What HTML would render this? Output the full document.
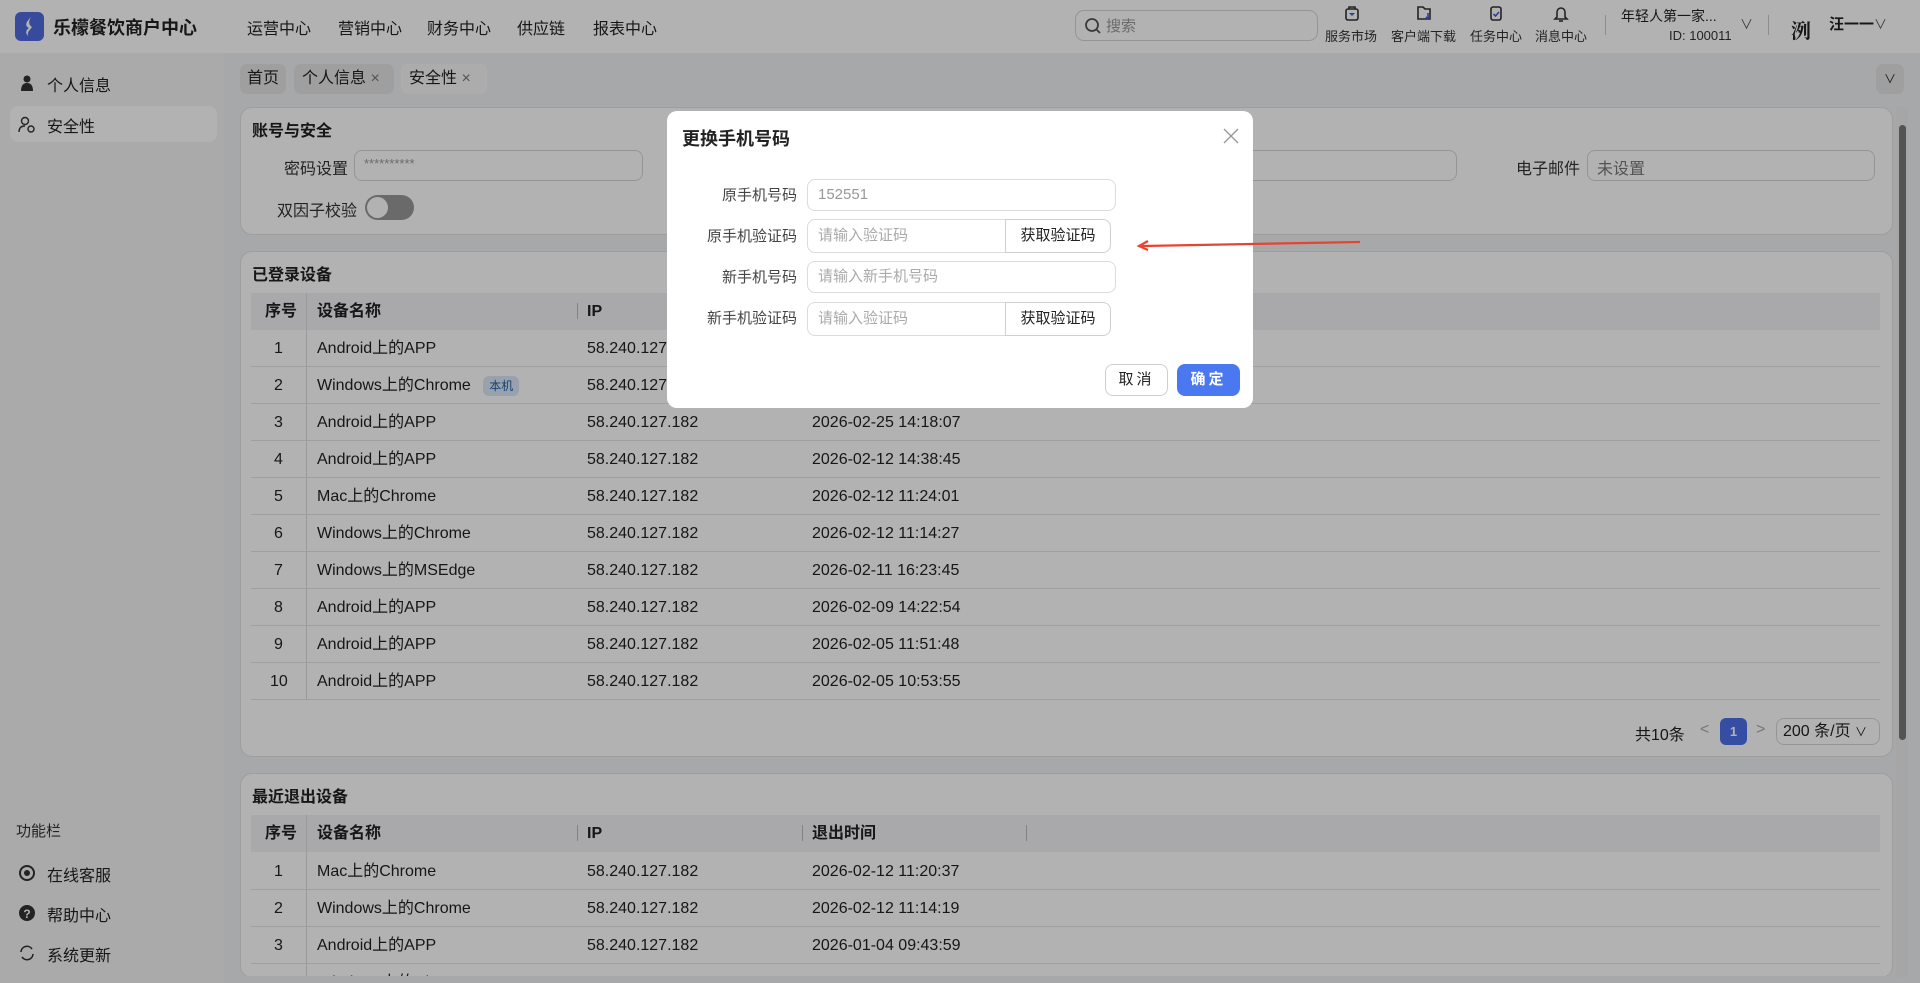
<!DOCTYPE html>
<html style="overflow:hidden;height:983px"><head><meta charset="utf-8"><style>
*{box-sizing:border-box;margin:0;padding:0}
body{width:1920px;height:983px;overflow:hidden;position:relative;font-family:"Liberation Sans","Noto Sans CJK SC",sans-serif;color:#222;background:#f0f1f4;font-size:16px}
.a{position:absolute}
.hdr{left:0;top:0;width:1920px;height:53px;background:#fff}
.side{left:0;top:53px;width:224px;height:930px;background:#f4f4f4}
.card{background:#fff;border:1px solid #e2e2e2;border-radius:12px}
.nav{top:15px;font-size:16px;color:#222}
.ico{font-size:13px;color:#333;top:26px}
.inp{border:1px solid #d6d6d6;border-radius:8px;background:#fff}
.th,.td{position:absolute;height:37px;line-height:37px;font-size:16px}
.th{font-weight:bold;background:#f2f3f6}
.row{position:absolute;left:251px;width:1629px;height:37px;border-bottom:1px solid #e4e4e4}
.ov{left:0;top:0;width:1920px;height:983px;background:rgba(0,0,0,0.3)}
.m{left:667px;top:111px;width:586px;height:297px;background:#fff;border-radius:10px}
.lbl{font-size:15px;color:#444;text-align:right;width:150px;left:-20px}
.mi{left:140px;width:309px;height:32px;border:1px solid #dcdcdc;border-radius:8px;font-size:15px;color:#aaa;line-height:30px;padding-left:10px}
.gb{left:338px;width:106px;height:34px;border:1px solid #cfcfcf;border-radius:0 8px 8px 0;background:#fff;font-size:15px;color:#222;text-align:center;line-height:32px}
#clip{position:absolute;left:0;top:0;width:1920px;height:983px;overflow:hidden}
</style></head><body><div id="clip">
<div class="a hdr"></div>
<div class="a" style="left:15px;top:12px;width:29px;height:29px;background:#4f6ae0;border-radius:6px"><svg width="29" height="29"><path d="M16 5 C10 11 10 14 14 16 C11 18 10 21 13 24 C12 20 15 18 17 15 C14 13 13 10 16 5Z" fill="#fff"/></svg></div>
<div class="a" style="left:53px;top:14px;font-size:18px;font-weight:bold">乐檬餐饮商户中心</div>
<div class="a nav" style="left:247px">运营中心</div>
<div class="a nav" style="left:338px">营销中心</div>
<div class="a nav" style="left:427px">财务中心</div>
<div class="a nav" style="left:517px">供应链</div>
<div class="a nav" style="left:593px">报表中心</div>
<div class="a inp" style="left:1075px;top:10px;width:243px;height:31px;border-radius:9px"><svg class="a" style="left:8px;top:6px" width="18" height="18"><circle cx="8" cy="8" r="6" stroke="#555" stroke-width="1.8" fill="none"/><path d="M12 12 L16 16" stroke="#555" stroke-width="1.8"/></svg><span class="a" style="left:30px;top:4px;color:#999;font-size:15px">搜索</span></div>
<svg class="a" style="left:1343px;top:4px" width="18" height="18"><rect x="3" y="5" width="12" height="11" rx="2" stroke="#333" stroke-width="1.6" fill="none"/><path d="M6 5 V3 H12 V5" stroke="#333" stroke-width="1.6" fill="none"/><path d="M6 9 H12 L9 12Z" fill="#3b5bdb"/></svg>
<svg class="a" style="left:1415px;top:4px" width="18" height="18"><path d="M3 3 H8 L10 5 H15 V15 H3Z" stroke="#333" stroke-width="1.6" fill="none"/><path d="M13 9 V15 M11 13 L13 15 L15 13" stroke="#3b5bdb" stroke-width="1.6" fill="none"/></svg>
<svg class="a" style="left:1487px;top:4px" width="18" height="18"><rect x="4" y="3" width="10" height="13" rx="2" stroke="#333" stroke-width="1.6" fill="none"/><path d="M6.5 10 L8.5 12 L12 8" stroke="#3b5bdb" stroke-width="1.6" fill="none"/></svg>
<svg class="a" style="left:1552px;top:4px" width="18" height="18"><path d="M5 13 V8 A4 4 0 0 1 13 8 V13 L15 15 H3Z" stroke="#333" stroke-width="1.6" fill="none"/><path d="M7 17 H11" stroke="#333" stroke-width="1.6"/></svg>
<div class="a ico" style="left:1325px">服务市场</div>
<div class="a ico" style="left:1391px">客户端下载</div>
<div class="a ico" style="left:1470px">任务中心</div>
<div class="a ico" style="left:1535px">消息中心</div>
<div class="a" style="left:1605px;top:15px;width:1px;height:20px;background:#ccc"></div>
<div class="a" style="left:1621px;top:6px;font-size:14px">年轻人第一家...</div>
<div class="a" style="left:1669px;top:28px;font-size:13px;color:#333">ID: 100011</div>
<div class="a" style="left:1740px;top:14px;font-size:13px;color:#555">∨</div>
<div class="a" style="left:1768px;top:15px;width:1px;height:20px;background:#ccc"></div>
<div class="a" style="left:1791px;top:15px;font-size:20px;font-family:'Noto Serif CJK SC',serif;font-weight:bold">洌</div>
<div class="a" style="left:1829px;top:13px;font-size:15px;font-weight:bold">汪一一</div>
<div class="a" style="left:1874px;top:14px;font-size:13px;color:#555">∨</div>

<div class="a side"></div>
<svg class="a" style="left:18px;top:74px" width="18" height="18"><circle cx="9" cy="5" r="3.5" fill="#333"/><path d="M3 17 Q3 9 9 9 Q15 9 15 17Z" fill="#333"/></svg>
<div class="a" style="left:47px;top:72px">个人信息</div>
<div class="a" style="left:10px;top:106px;width:207px;height:36px;background:#fff;border-radius:8px"></div>
<svg class="a" style="left:18px;top:116px" width="18" height="18"><circle cx="7" cy="5" r="3.5" stroke="#333" stroke-width="1.4" fill="none"/><path d="M1 16 Q1 10 7 10" stroke="#333" stroke-width="1.4" fill="none"/><circle cx="13" cy="13" r="3" stroke="#333" stroke-width="1.4" fill="none"/></svg>
<div class="a" style="left:47px;top:113px">安全性</div>
<div class="a" style="left:16px;top:820px;font-size:15px;color:#333">功能栏</div>
<svg class="a" style="left:18px;top:864px" width="18" height="18"><circle cx="9" cy="9" r="7" stroke="#333" stroke-width="2" fill="none"/><circle cx="9" cy="9" r="3" fill="#333"/></svg>
<div class="a" style="left:47px;top:862px">在线客服</div>
<svg class="a" style="left:18px;top:904px" width="18" height="18"><circle cx="9" cy="9" r="8" fill="#333"/><text x="9" y="14" font-size="12" font-weight="bold" fill="#fff" text-anchor="middle" font-family="Liberation Sans">?</text></svg>
<div class="a" style="left:47px;top:902px">帮助中心</div>
<svg class="a" style="left:18px;top:944px" width="18" height="18"><path d="M3 8 A6 6 0 0 1 14 5 M15 10 A6 6 0 0 1 4 13" stroke="#333" stroke-width="1.6" fill="none"/></svg>
<div class="a" style="left:47px;top:942px">系统更新</div>

<div class="a" style="left:240px;top:64px;width:46px;height:30px;background:#e4e4e6;border-radius:7px;line-height:30px;text-align:center">首页</div>
<div class="a" style="left:294px;top:64px;width:100px;height:30px;background:#e4e4e6;border-radius:7px;line-height:30px;padding-left:8px">个人信息 <span style="color:#777">×</span></div>
<div class="a" style="left:401px;top:64px;width:86px;height:30px;background:#f7f7f8;border-radius:7px;line-height:30px;padding-left:8px">安全性 <span style="color:#777">×</span></div>
<div class="a" style="left:1876px;top:64px;width:28px;height:30px;background:#e4e4e6;border-radius:7px;text-align:center;line-height:30px;font-size:12px">∨</div>
<div class="a" style="left:1896px;top:107px;width:12px;height:870px;background:#eee"></div>
<div class="a" style="left:1899px;top:125px;width:7px;height:615px;background:#777;border-radius:4px"></div>

<div class="a card" style="left:240px;top:107px;width:1653px;height:128px"></div>
<div class="a" style="left:252px;top:117px;font-weight:bold">账号与安全</div>
<div class="a" style="left:284px;top:155px;color:#333">密码设置</div>
<div class="a inp" style="left:354px;top:150px;width:289px;height:31px"><span class="a" style="left:9px;top:5px;color:#999;font-size:13px">**********</span></div>
<div class="a inp" style="left:1150px;top:150px;width:307px;height:31px"></div>
<div class="a" style="left:1516px;top:155px;color:#333">电子邮件</div>
<div class="a inp" style="left:1587px;top:150px;width:288px;height:31px"><span class="a" style="left:9px;top:4px;color:#777">未设置</span></div>
<div class="a" style="left:277px;top:197px;color:#333">双因子校验</div>
<div class="a" style="left:365px;top:195px;width:49px;height:25px;background:#999;border-radius:13px"><div class="a" style="left:2px;top:2px;width:21px;height:21px;border-radius:50%;background:#fff"></div></div>

<div class="a card" style="left:240px;top:251px;width:1653px;height:506px"></div>
<div class="a" style="left:252px;top:261px;font-weight:bold">已登录设备</div>
<div class="th" style="left:251px;top:293px;width:1629px"></div>
<div class="th" style="left:265px;top:293px">序号</div>
<div class="th" style="left:317px;top:293px">设备名称</div>
<div class="th" style="left:587px;top:293px">IP</div>
<div class="a" style="left:577px;top:303px;width:1px;height:16px;background:#bbb"></div>
<div class="a" style="left:306px;top:293px;width:1px;height:407px;background:#ddd"></div>
<div id="t1"></div>
<div class="a" style="left:1635px;top:721px">共10条</div>
<div class="a" style="left:1700px;top:721px;color:#aaa">&lt;</div>
<div class="a" style="left:1720px;top:718px;width:27px;height:27px;background:#4c6fe8;border-radius:6px;color:#fff;font-size:13px;font-weight:bold;text-align:center;line-height:27px">1</div>
<div class="a" style="left:1756px;top:721px;color:#aaa">&gt;</div>
<div class="a inp" style="left:1776px;top:718px;width:104px;height:27px;padding-left:6px;line-height:25px">200 条/页 <span style="font-size:12px">∨</span></div>

<div class="a card" style="left:240px;top:773px;width:1653px;height:205px;overflow:hidden"></div>
<div class="a" style="left:252px;top:783px;font-weight:bold">最近退出设备</div>
<div class="th" style="left:251px;top:815px;width:1629px"></div>
<div class="th" style="left:265px;top:815px">序号</div>
<div class="th" style="left:317px;top:815px">设备名称</div>
<div class="th" style="left:587px;top:815px">IP</div>
<div class="th" style="left:812px;top:815px">退出时间</div>
<div class="a" style="left:577px;top:825px;width:1px;height:16px;background:#bbb"></div>
<div class="a" style="left:802px;top:825px;width:1px;height:16px;background:#bbb"></div>
<div class="a" style="left:1026px;top:825px;width:1px;height:16px;background:#bbb"></div>
<div class="a" style="left:306px;top:815px;width:1px;height:163px;background:#ddd"></div>
<div class="a" style="left:0;top:976px;width:1920px;height:7px;overflow:hidden"></div>
<div id="t2"></div>
<div class="a" style="left:240px;top:976px;width:1653px;height:7px;background:#f0f1f4"></div>

<div class="a ov"></div>
<div class="a m">
<div class="a" style="left:15px;top:14px;font-size:18px;font-weight:bold">更换手机号码</div>
<svg class="a" style="left:556px;top:17px" width="16" height="16"><path d="M1 1 L15 15 M15 1 L1 15" stroke="#999" stroke-width="1.4"/></svg>
<div class="a lbl" style="top:73px">原手机号码</div>
<div class="a mi" style="top:68px;color:#999">152551</div>
<div class="a lbl" style="top:114px">原手机验证码</div>
<div class="a mi" style="top:108px;width:200px;height:34px;border-radius:8px 0 0 8px;line-height:32px">请输入验证码</div>
<div class="a gb" style="top:108px">获取验证码</div>
<div class="a lbl" style="top:155px">新手机号码</div>
<div class="a mi" style="top:150px">请输入新手机号码</div>
<div class="a lbl" style="top:196px">新手机验证码</div>
<div class="a mi" style="top:191px;width:200px;height:34px;border-radius:8px 0 0 8px;line-height:32px">请输入验证码</div>
<div class="a gb" style="top:191px">获取验证码</div>
<div class="a" style="left:438px;top:253px;width:63px;height:32px;border:1px solid #cfcfcf;border-radius:8px;text-align:center;line-height:30px;font-size:15px;letter-spacing:3px">取消</div>
<div class="a" style="left:510px;top:253px;width:63px;height:32px;background:#4a78f0;border-radius:8px;text-align:center;line-height:32px;font-size:15px;color:#fff;font-weight:bold;letter-spacing:3px">确定</div>
</div>
<svg class="a" style="left:1130px;top:235px" width="240" height="20"><path d="M230 7 L12 11" stroke="#e8432f" stroke-width="2.2"/><path d="M18 6 L9 11 L18 15" stroke="#e8432f" stroke-width="2.2" fill="none"/></svg>
</div>
<script>
var d1=[["Android上的APP","2026-03-01 10:00:00"],["Windows上的Chrome","2026-03-01 10:00:00"],["Android上的APP","2026-02-25 14:18:07"],["Android上的APP","2026-02-12 14:38:45"],["Mac上的Chrome","2026-02-12 11:24:01"],["Windows上的Chrome","2026-02-12 11:14:27"],["Windows上的MSEdge","2026-02-11 16:23:45"],["Android上的APP","2026-02-09 14:22:54"],["Android上的APP","2026-02-05 11:51:48"],["Android上的APP","2026-02-05 10:53:55"]];
var d2=[["Mac上的Chrome","2026-02-12 11:20:37"],["Windows上的Chrome","2026-02-12 11:14:19"],["Android上的APP","2026-01-04 09:43:59"],["Windows上的Chrome","2025-12-18 18:48:21"]];
function mk(id,d,top){var h="";d.forEach(function(r,i){var y=top+i*37;h+='<div class="row" style="top:'+y+'px"></div><div class="td" style="left:'+(i==9?270:274)+'px;top:'+y+'px">'+(i+1)+'</div><div class="td" style="left:317px;top:'+y+'px">'+r[0]+(id=="t1"&&i==1?' <span style="background:#dce8f7;color:#1f5fa8;font-size:12px;padding:3px 6px;border-radius:6px;margin-left:8px">本机</span>':'')+'</div><div class="td" style="left:587px;top:'+y+'px">58.240.127.182</div><div class="td" style="left:812px;top:'+y+'px">'+r[1]+'</div>';});document.getElementById(id).outerHTML=h;}
mk("t1",d1,330);mk("t2",d2,853);
</script>
</body></html>
